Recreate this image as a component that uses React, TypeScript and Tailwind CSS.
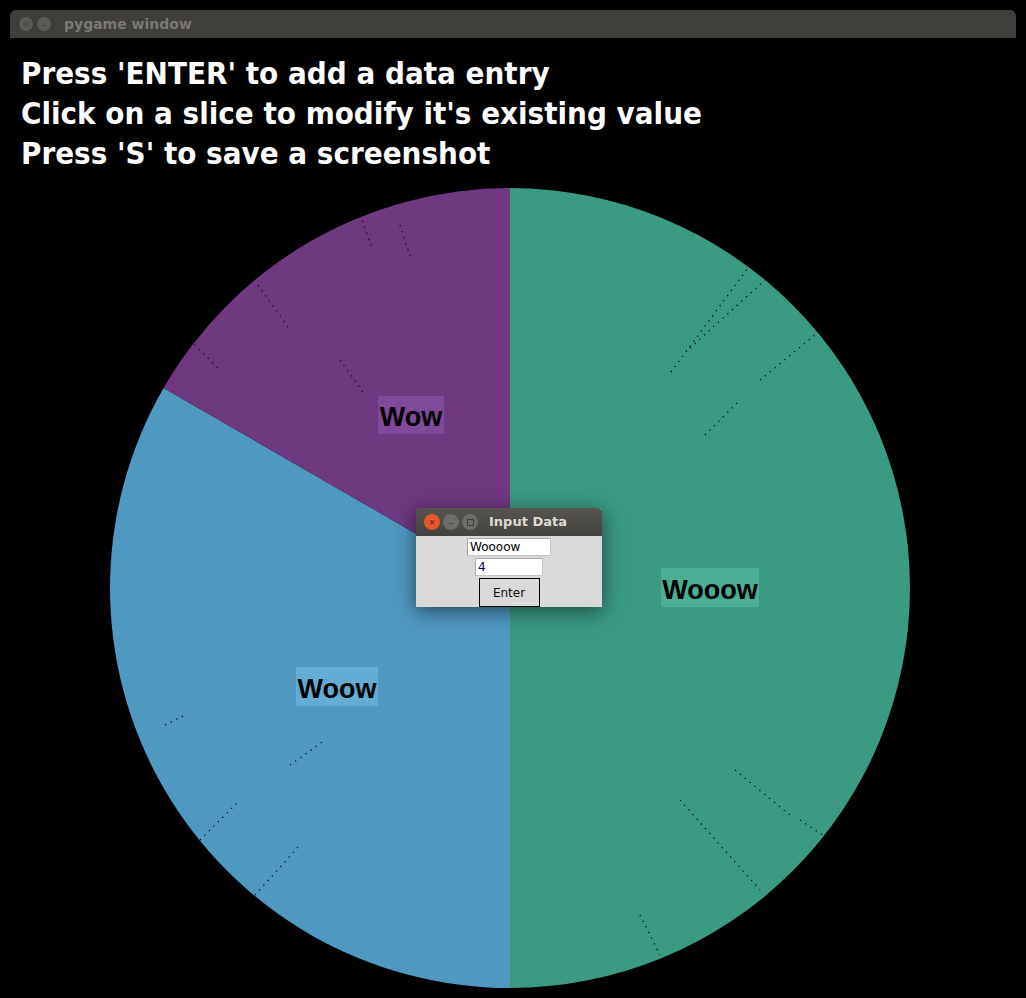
import React from "react";

// slices of the pie, angles in degrees clockwise from 12 o'clock
const slices = [
  { name: "Wooow", value: 6, color: "#3a9a82" },
  { name: "Woow", value: 4, color: "#4f98c2" },
  { name: "Wow", value: 2, color: "#6f3880" },
];

const R = 400;

const pt = (deg: number) => {
  const a = (deg * Math.PI) / 180;
  return [R + R * Math.sin(a), R - R * Math.cos(a)];
};

// dotted artifacts seen on the chart (svg coords)
const specks = [
  [250, 27, 262, 60],
  [290, 37, 300, 68],
  [148, 97, 180, 142],
  [80, 152, 110, 182],
  [230, 172, 255, 207],
  [561, 184, 638, 80],
  [580, 160, 655, 92],
  [650, 192, 705, 147],
  [595, 247, 630, 212],
  [625, 582, 680, 627],
  [570, 612, 650, 702],
  [690, 632, 720, 652],
  [530, 727, 550, 767],
  [180, 577, 215, 552],
  [90, 652, 130, 612],
  [145, 707, 190, 657],
  [55, 537, 75, 527],
];

const PieChart = () => {
  const total = slices.reduce((s, x) => s + x.value, 0);
  let start = 0;
  return (
    <svg width={800} height={800} viewBox="0 0 800 800" className="block">
      {slices.map((s) => {
        const end = start + (s.value / total) * 360;
        const [x1, y1] = pt(start);
        const [x2, y2] = pt(end);
        const large = end - start > 180 ? 1 : 0;
        const d = `M${R},${R} L${x1},${y1} A${R},${R} 0 ${large} 1 ${x2},${y2} Z`;
        start = end;
        return <path key={s.name} d={d} fill={s.color} />;
      })}
      {specks.map(([a, b, c, e], i) => (
        <line key={i} x1={a} y1={b} x2={c} y2={e} stroke="#111" strokeWidth={1.3} strokeDasharray="1.3 5" />
      ))}
      <g style={{ fontFamily: '"Liberation Sans", Arial, sans-serif' }} fontWeight={700} fontSize={27}>
        <rect x={268} y={208} width={66} height={38} fill="#82489a" />
        <text x={301} y={238} textAnchor="middle" fill="#000">Wow</text>
        <rect x={551} y={380} width={98} height={39} fill="#4bae94" />
        <text x={600} y={411} textAnchor="middle" fill="#000">Wooow</text>
        <rect x={186} y={479} width={82} height={39} fill="#62acd5" />
        <text x={227} y={510} textAnchor="middle" fill="#000">Woow</text>
      </g>
    </svg>
  );
};

const WinButton = ({ children, red }: { children: React.ReactNode; red?: boolean }) => (
  <div
    className={`w-[16px] h-[16px] rounded-full flex items-center justify-center text-[10px] leading-none ${
      red ? "bg-[#e2572b] text-[#6b2410]" : "bg-[#6e6c66] text-[#3c3b37]"
    }`}
  >
    {children}
  </div>
);

const InputDialog = () => (
  <div className="absolute left-[416px] top-[508px] w-[186px] shadow-[0_4px_18px_rgba(0,0,0,0.55)]">
    <div className="h-[28px] rounded-t-[5px] bg-gradient-to-b from-[#56544e] to-[#44433e] flex items-center pl-[8px] gap-[3px]">
      <WinButton red>×</WinButton>
      <WinButton>–</WinButton>
      <WinButton>
        <span className="block w-[7px] h-[7px] border border-[#3c3b37]" />
      </WinButton>
      <span className="ml-[8px] text-[13px] font-bold text-[#dfdbd2] font-['DejaVu_Sans',sans-serif]">Input Data</span>
    </div>
    <div className="bg-[#d9d9d9] h-[71px] flex flex-col items-center pt-[2px] gap-[2px] font-['DejaVu_Sans',sans-serif] text-[12px]">
      <div className="w-[84px] h-[18px] bg-white border border-[#c4c4c4] border-t-[#a8a8a8] border-l-[#a8a8a8] pl-[2px] leading-[16px] text-black">
        Woooow
      </div>
      <div className="w-[68px] h-[18px] bg-white border border-[#c4c4c4] border-t-[#a8a8a8] border-l-[#a8a8a8] pl-[2px] leading-[16px] text-[#000060]">
        4
      </div>
      <div className="w-[61px] h-[29px] border-[1.5px] border-black bg-[#d9d9d9] flex items-center justify-center text-[12px] text-[#111]">
        Enter
      </div>
    </div>
  </div>
);

export default function App() {
  return (
    <div className="relative w-[1026px] h-[998px] bg-black overflow-hidden">
      {/* window chrome */}
      <div className="mx-[10px] mt-[10px] h-[28px] rounded-t-[6px] bg-[#3f3e3a] flex items-center pl-[9px] gap-[4px]">
        <div className="w-[14px] h-[14px] rounded-full bg-[#5b5a55] text-[#3f3e3a] text-[10px] leading-none flex items-center justify-center">×</div>
        <div className="w-[14px] h-[14px] rounded-full bg-[#5b5a55] text-[#3f3e3a] text-[10px] leading-none flex items-center justify-center">–</div>
        <span className="ml-[9px] text-[14px] font-bold text-[#7b7973] font-['DejaVu_Sans',sans-serif]">pygame window</span>
      </div>

      {/* instructions */}
      <div className="pl-[21px] pt-[15px] text-white font-bold text-[31px] leading-[40px] font-['Liberation_Sans_Narrow','DejaVu_Sans_Condensed',sans-serif]">
        <div>Press 'ENTER' to add a data entry</div>
        <div>Click on a slice to modify it's existing value</div>
        <div>Press 'S' to save a screenshot</div>
      </div>

      <div className="ml-[110px] mt-[15px]">
        <PieChart />
      </div>

      <InputDialog />
    </div>
  );
}
